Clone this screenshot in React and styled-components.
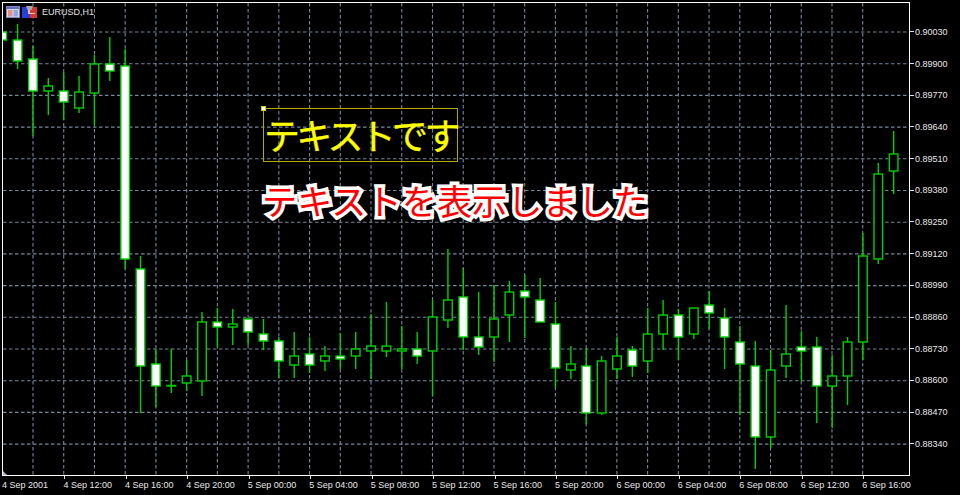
import React from "react";
import styled, { createGlobalStyle } from "styled-components";

const GlobalStyle = createGlobalStyle`
  html, body {
    margin: 0;
    background: #000;
  }
`;

const Terminal = styled.div`
  display: grid;
  grid-template-columns: 908px 50px;
  grid-template-rows: 474px 19px;
  width: 960px;
  height: 495px;
  box-sizing: border-box;
  padding: 2px 0 0 2px;
  background: #000;
  color: #e8e8e8;
  font-family: "Liberation Sans", Arial, sans-serif;
  font-size: 9px;
  overflow: hidden;
`;
const Plot = styled.div`
  position: relative;
  box-sizing: border-box;
  border: 1px solid #fff;
  overflow: hidden;
`;
const ChartSvg = styled.svg`
  display: block;
`;
const SymbolBar = styled.div`
  position: absolute;
  top: 3px;
  left: 3px;
  display: flex;
  align-items: center;
  gap: 2px;
  height: 12px;
`;
const SymbolName = styled.span`
  margin-left: 3px;
  color: #e0e0e0;
`;
const TextObject = styled.div`
  position: absolute;
  left: 260px;
  top: 105px;
  box-sizing: border-box;
  width: 195px;
  height: 54px;
  border: 1px solid #b4a800;
  color: #ffff00;
  font-family: "Noto Sans CJK JP", sans-serif;
  font-size: 36px;
  font-weight: 400;
  letter-spacing: -3.7px;
  line-height: 50px;
  white-space: nowrap;
  -webkit-text-stroke: 0.4px #ffff00;
`;
const Handle = styled.span`
  position: absolute;
  left: -3px;
  top: -3px;
  width: 3px;
  height: 3px;
  border: 1px solid #d8d000;
  background: #fff;
`;
const OutlinedLabel = styled.div`
  position: absolute;
  left: 259px;
  top: 172px;
  color: #ff0000;
  font-family: "Noto Sans CJK JP", sans-serif;
  font-size: 35.2px;
  font-weight: 400;
  line-height: 50px;
  white-space: nowrap;
  -webkit-text-stroke: 7px #fff;
  paint-order: stroke fill;
  stroke-linejoin: round;
`;
const PriceAxis = styled.div`
  display: flex;
  flex-direction: column;
  padding-top: 14px;
`;
const PriceRow = styled.div`
  display: flex;
  align-items: center;
  flex: 0 0 31.7px;
  gap: 1px;
`;
const PriceTick = styled.span`
  width: 4px;
  height: 1px;
  background: #e0e0e0;
`;
const TimeAxis = styled.div`
  display: flex;
  grid-column: 1 / 3;
`;
const TimeCell = styled.div`
  flex: 0 0 61.45px;
  display: flex;
  flex-direction: column;
  white-space: nowrap;
`;
const TimeTick = styled.span`
  width: 1px;
  height: 3px;
  margin-left: 1px;
  background: ${(p) => (p.$hidden ? "transparent" : "#e0e0e0")};
`;
const TimeText = styled.span`
  line-height: 13px;
`;

const PRICES = ["0.90030", "0.89900", "0.89770", "0.89640", "0.89510", "0.89380", "0.89250", "0.89120", "0.88990", "0.88860", "0.88730", "0.88600", "0.88470", "0.88340"];
const TIMES = ["4 Sep 2001", "4 Sep 12:00", "4 Sep 16:00", "4 Sep 20:00", "5 Sep 00:00", "5 Sep 04:00", "5 Sep 08:00", "5 Sep 12:00", "5 Sep 16:00", "5 Sep 20:00", "6 Sep 00:00", "6 Sep 04:00", "6 Sep 08:00", "6 Sep 12:00", "6 Sep 16:00"];

// body top, body bottom, wick top, wick bottom, filled white
const CANDLES = [
  [32, 40, 32, 40, 1], [40, 61, 24, 69, 1], [59, 91, 46, 136, 1], [86, 91, 78, 115, 0],
  [91, 102, 72, 120, 1], [92, 108, 76, 113, 0], [64, 93, 55, 125, 0], [64, 71, 37, 81, 1],
  [66, 259, 49, 269, 1], [269, 366, 256, 413, 1], [364, 386, 349, 407, 1], [385.5, 386, 349, 393, 0],
  [376, 383, 360, 391, 0], [322, 381, 312, 396, 0], [322, 327, 308, 347, 1], [324, 327, 309, 345, 0],
  [319, 332, 319, 345, 1], [334, 341, 319, 350, 1], [341, 361, 337, 378, 1], [356, 365, 332, 378, 0],
  [354, 365, 337, 373, 1], [356, 361, 346, 371, 0], [356, 359, 333, 369, 1], [349, 356, 332, 369, 0],
  [346, 351, 314, 379, 0], [346, 351, 302, 357, 0], [349, 351, 326, 369, 0], [349, 356, 332, 364, 1],
  [317, 351, 300, 396, 0], [300, 320, 249, 328, 0], [297, 337, 268, 350, 1], [337, 347, 292, 355, 1],
  [319, 337, 285, 362, 0], [292, 315, 281, 342, 0], [291, 297, 275, 338, 1], [300, 322, 278, 322, 1],
  [324, 368, 302, 388, 1], [364, 370, 346, 379, 0], [366, 413, 348, 424, 1], [361, 413, 356, 415, 0],
  [356, 369, 337, 379, 0], [350, 366, 346, 377, 1], [334, 361, 308, 373, 0], [315, 334, 300, 350, 0],
  [315, 337, 309, 360, 1], [308, 334, 308, 339, 0], [305, 313, 291, 329, 1], [318, 337, 308, 369, 1],
  [342, 364, 326, 415, 1], [366, 437, 341, 469, 1], [370, 437, 350, 448, 0], [354, 366, 305, 378, 0],
  [347, 351, 331, 381, 1], [347, 386, 337, 423, 1], [376, 386, 355, 428, 0], [342, 376, 337, 405, 0],
  [256, 342, 233, 360, 0], [174, 259, 163, 264, 0], [154, 171, 131, 194, 0],
];

const GRID_Y = PRICES.map((_, i) => 32 + i * 31.7);
const GRID_X = Array.from({ length: 28 }, (_, i) => 33 + i * 30.73);
const GREEN = "#00d000";

const WindowIcon = () => (
  <svg width="14" height="12" viewBox="0 0 14 12">
    <rect x="0.5" y="0.5" width="13" height="11" fill="#d8d8e8" stroke="#8088b8" />
    <rect x="1" y="1" width="12" height="2" fill="#6070c0" />
    <rect x="2" y="4" width="4.5" height="6.5" fill="#e89088" />
    <rect x="7.5" y="4" width="4.5" height="6.5" fill="#88a8e8" />
  </svg>
);

const SaveIcon = () => (
  <svg width="15" height="12" viewBox="0 0 15 12">
    <rect x="0" y="1" width="8" height="11" fill="#2840d8" />
    <rect x="8" y="1" width="7" height="11" fill="#d83830" />
    <path d="M4 0h7l-1.5 4h-4z" fill="#a8a8a8" />
    <rect x="6" y="4" width="2" height="4" fill="#c8c8c8" />
    <rect x="8" y="7" width="5" height="1" fill="#f0c8c0" />
  </svg>
);

const Candle = ({ index, data }) => {
  const [top, bottom, wickTop, wickBottom, white] = data;
  const x = 2.2 + index * 15.37;
  return (
    <g>
      <line x1={x} x2={x} y1={wickTop} y2={wickBottom} stroke={GREEN} strokeWidth="1.4" />
      <rect
        x={x - 4.3}
        y={top}
        width="8.6"
        height={bottom - top}
        fill={white ? "#fff" : "#000"}
        stroke={GREEN}
        strokeWidth="1.4"
      />
    </g>
  );
};

const Chart = () => (
  <ChartSvg width="906" height="472" viewBox="3 3 906 472">
    {GRID_Y.map((y) => (
      <line key={y} x1="3" x2="909" y1={y} y2={y} stroke="#76879a" strokeWidth="1.1" strokeDasharray="3.5 2.5" />
    ))}
    {GRID_X.map((x) => (
      <line key={x} x1={x} x2={x} y1="3" y2="475" stroke="#76879a" strokeWidth="1.1" strokeDasharray="3.5 2.5" />
    ))}
    {CANDLES.map((c, i) => (
      <Candle key={i} index={i} data={c} />
    ))}
    <path d="M3 471l4 4h-4z" fill="#a8b8c8" />
  </ChartSvg>
);

export default function App() {
  return (
    <Terminal>
      <GlobalStyle />
      <Plot>
        <Chart />
        <SymbolBar>
          <WindowIcon />
          <SaveIcon />
          <SymbolName>EURUSD,H1</SymbolName>
        </SymbolBar>
        <TextObject>
          <Handle />
          テキストです
        </TextObject>
        <OutlinedLabel>テキストを表示しました</OutlinedLabel>
      </Plot>
      <PriceAxis>
        {PRICES.map((p) => (
          <PriceRow key={p}>
            <PriceTick />
            {p}
          </PriceRow>
        ))}
      </PriceAxis>
      <TimeAxis>
        {TIMES.map((t, i) => (
          <TimeCell key={t}>
            <TimeTick $hidden={i === 0} />
            <TimeText>{t}</TimeText>
          </TimeCell>
        ))}
      </TimeAxis>
    </Terminal>
  );
}
